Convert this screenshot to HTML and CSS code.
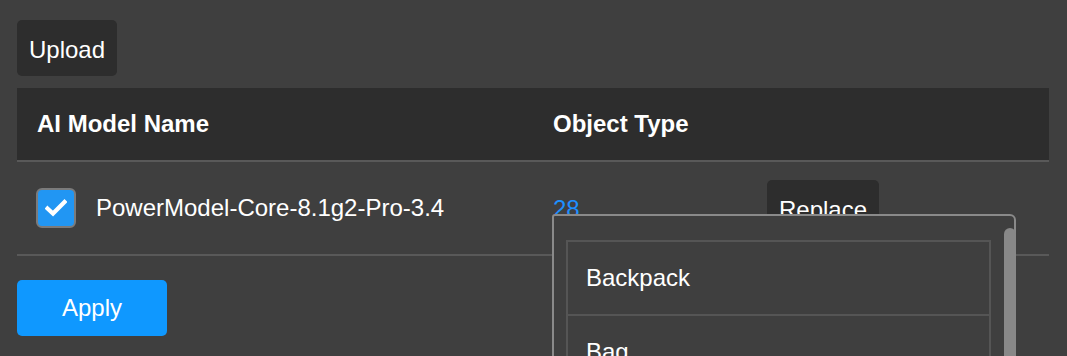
FILE: index.html
```html
<!doctype html>
<html lang="en">
<head>
	<meta charset="UTF-8">
	<title>AI Models</title>
	<link rel="stylesheet" href="styles.css">
</head>
<body>
	<main class="page">
		<button class="btn btnDark">Upload</button>

		<table class="modelTable">
			<colgroup>
				<col class="colName">
				<col class="colType">
				<col>
			</colgroup>
			<thead>
				<tr>
					<th>AI Model Name</th>
					<th>Object Type</th>
					<th></th>
				</tr>
			</thead>
			<tbody>
				<tr>
					<td>
						<label class="modelName">
							<span class="check">
								<svg width="22" height="18" viewBox="0 0 22 18"><polyline points="2.5,9.5 8,14.5 19.5,3" fill="none" stroke="#fff" stroke-width="4.2" stroke-linecap="square"/></svg>
							</span>
							PowerModel-Core-8.1g2-Pro-3.4
						</label>
					</td>
					<td class="typeCell">
						<a class="typeCount" href="#">28</a>
						<!-- object type picker, open -->
						<div class="picker">
							<ul class="pickerList">
								<li>Backpack</li>
								<li>Bag</li>
								<li>Bicycle</li>
							</ul>
							<span class="pickerThumb"></span>
						</div>
					</td>
					<td><button class="btn btnDark">Replace</button></td>
				</tr>
			</tbody>
		</table>

		<button class="btn btnApply">Apply</button>
	</main>
</body>
</html>
```

FILE: styles.css
```css
html, body {
	overflow: hidden;
}
body {
	margin: 0;
	background: #3f3f3f;
	color: #fff;
	font: 24px "Liberation Sans", Arial, sans-serif;
}

.page {
	padding: 20px 17px;
}

.btn {
	display: block;
	height: 56px;
	padding: 0 12px;
	border: none;
	border-radius: 5px;
	color: #fff;
	font: inherit;
	cursor: pointer;
}
/* text sits a touch low in the dark buttons */
.btnDark {
	padding-top: 4px;
	background: #2d2d2d;
}
.btnApply {
	width: 150px;
	margin-top: 24px;
	background: #0f98ff;
}

.modelTable {
	width: 1032px;
	margin-top: 12px;
	border-collapse: collapse;
	table-layout: fixed;
}
.colName { width: 516px; }
.colType { width: 214px; }

.modelTable th {
	height: 72px;
	padding: 0 20px;
	background: #2d2d2d;
	border-bottom: 2px solid #595959;
	text-align: left;
	font-weight: bold;
}
.modelTable td {
	height: 92px;
	padding: 0 20px;
	border-bottom: 2px solid #595959;
	vertical-align: middle;
}
.modelTable td:first-child {
	padding-left: 19px;
}

.modelName {
	display: flex;
	align-items: center;
	gap: 20px;
}
.check {
	display: flex;
	align-items: center;
	justify-content: center;
	width: 36px;
	height: 36px;
	border: 2px solid #7b7b7b;
	border-radius: 6px;
	background: #2196f3;
}

.typeCell {
	position: relative;
}
.typeCount {
	position: relative;
	top: 1px;
	color: #1e90ff;
	text-decoration: none;
}

/* dropdown hangs over the row and runs off the bottom of the window */
.picker {
	position: absolute;
	top: 52px;
	left: 19px;
	z-index: 1;
	width: 436px;
	height: 300px;
	padding: 24px 12px 0;
	border: 2px solid #8a8a8a;
	border-radius: 3px 6px 0 0;
	background: #3f3f3f;
}
.pickerList {
	width: 421px;
	margin: 0;
	padding: 0;
	list-style: none;
	border: 2px solid #555;
}
.pickerList li {
	height: 72px;
	line-height: 72px;
	padding: 0 18px;
	border-top: 2px solid #555;
}
.pickerList li:first-child {
	border-top: none;
}
.pickerThumb {
	position: absolute;
	top: 12px;
	right: -2px;
	width: 12px;
	height: 260px;
	border-radius: 6px 6px 0 0;
	background: #888;
}
```
